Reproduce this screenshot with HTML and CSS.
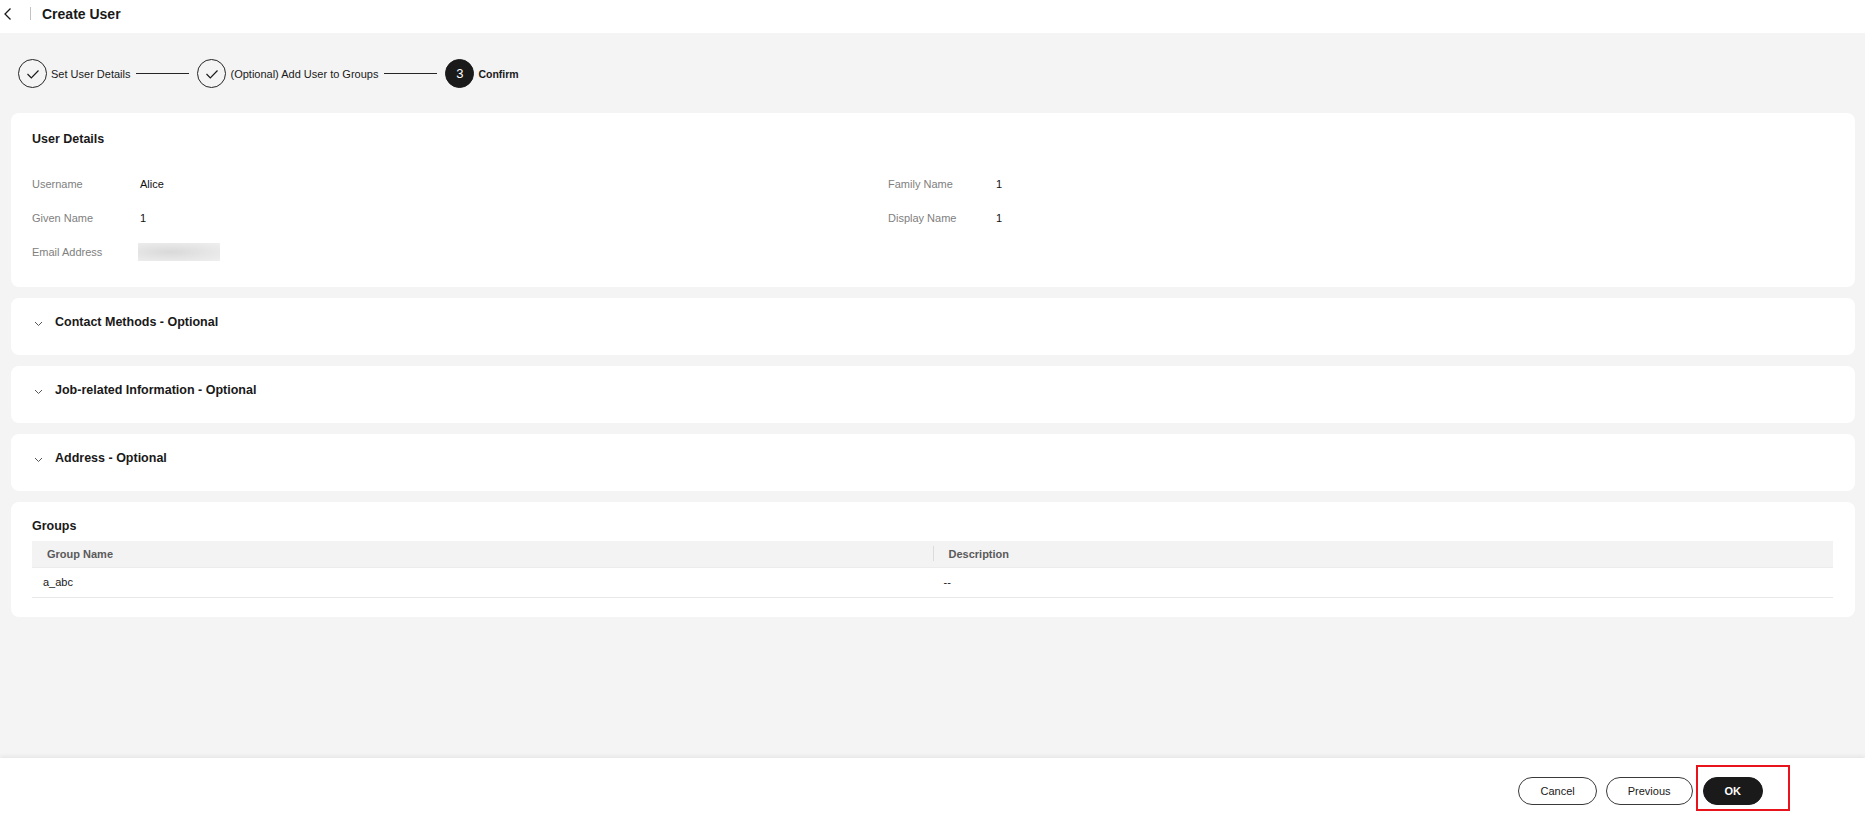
FILE: index.html
```html
<!DOCTYPE html>
<html lang="en">
<head>
  <meta charset="UTF-8">
  <title>Create User</title>
  <link rel="stylesheet" href="styles.css">
</head>
<body>
  <header class="topbar">
    <button class="back" aria-label="Back">
      <svg width="10" height="14" viewBox="0 0 10 14"><path d="M7.5 1.5 L2 7 L7.5 12.5" fill="none" stroke="#191919" stroke-width="1.3"/></svg>
    </button>
    <span class="sep"></span>
    <h1>Create User</h1>
  </header>

  <main class="content">
    <ol class="steps">
      <li class="step done">
        <span class="dot"><svg width="28" height="28" viewBox="0 0 28 28"><path d="M8.5 14 L12.3 17.8 L19.5 10.5" fill="none" stroke="#191919" stroke-width="1.2"/></svg></span>
        <span class="step-name">Set User Details</span>
      </li>
      <li class="line"></li>
      <li class="step done">
        <span class="dot"><svg width="28" height="28" viewBox="0 0 28 28"><path d="M8.5 14 L12.3 17.8 L19.5 10.5" fill="none" stroke="#191919" stroke-width="1.2"/></svg></span>
        <span class="step-name">(Optional) Add User to Groups</span>
      </li>
      <li class="line"></li>
      <li class="step current">
        <span class="dot">3</span>
        <span class="step-name">Confirm</span>
      </li>
    </ol>

    <section class="card details">
      <h2>User Details</h2>
      <div class="fields">
        <div class="field"><span class="label">Username</span><span class="value">Alice</span></div>
        <div class="field"><span class="label">Family Name</span><span class="value">1</span></div>
        <div class="field"><span class="label">Given Name</span><span class="value">1</span></div>
        <div class="field"><span class="label">Display Name</span><span class="value">1</span></div>
        <div class="field"><span class="label">Email Address</span><span class="value"><span class="blurred"></span></span></div>
      </div>
    </section>

    <section class="card fold">
      <svg class="caret" width="9" height="6" viewBox="0 0 9 6"><path d="M1 1 L4.5 4.5 L8 1" fill="none" stroke="#575757" stroke-width="1"/></svg>
      <h2>Contact Methods - Optional</h2>
    </section>
    <section class="card fold">
      <svg class="caret" width="9" height="6" viewBox="0 0 9 6"><path d="M1 1 L4.5 4.5 L8 1" fill="none" stroke="#575757" stroke-width="1"/></svg>
      <h2>Job-related Information - Optional</h2>
    </section>
    <section class="card fold">
      <svg class="caret" width="9" height="6" viewBox="0 0 9 6"><path d="M1 1 L4.5 4.5 L8 1" fill="none" stroke="#575757" stroke-width="1"/></svg>
      <h2>Address - Optional</h2>
    </section>

    <section class="card groups">
      <h2>Groups</h2>
      <table class="grid">
        <thead>
          <tr><th>Group Name</th><th class="divided">Description</th></tr>
        </thead>
        <tbody>
          <tr><td>a_abc</td><td>--</td></tr>
        </tbody>
      </table>
    </section>
  </main>

  <footer class="actions">
    <button class="btn">Cancel</button>
    <button class="btn">Previous</button>
    <button class="btn primary">OK</button>
    <span class="highlight"></span>
  </footer>
</body>
</html>
```

FILE: styles.css
```css
* {
  box-sizing: border-box;
}
body {
  margin: 0;
  height: 100vh;
  display: flex;
  flex-direction: column;
  font-family: 'Liberation Sans', Arial, sans-serif;
  font-size: 11px;
  color: #191919;
  background: #f4f4f4;
}

/* top bar */
.topbar {
  height: 33px;
  flex: none;
  display: flex;
  align-items: center;
  padding: 0 0 6px 3px;
  background: #fff;
}
.back {
  border: none;
  background: none;
  padding: 0;
  display: flex;
}
.sep {
  width: 1px;
  height: 13px;
  background: #c2c2c2;
  margin: 0 11px 0 17px;
}
.topbar h1 {
  margin: 0;
  font-size: 14px;
  font-weight: 700;
}

/* main area */
.content {
  flex: 1;
  padding: 0 10px 0 11px;
}

.steps {
  list-style: none;
  margin: 0;
  padding: 26px 0 25px 7px;
  display: flex;
  align-items: center;
}
.step {
  display: flex;
  align-items: center;
}
.dot {
  width: 29px;
  height: 29px;
  border-radius: 50%;
  border: 1px solid #252525;
  display: flex;
  align-items: center;
  justify-content: center;
}
.dot svg {
  margin: -1px;
}
.step.current .dot {
  background: #1a1a1a;
  border-color: #1a1a1a;
  color: #fff;
  font-size: 13px;
}
.step-name {
  margin-left: 4px;
}
.step.current .step-name {
  font-weight: 700;
  font-size: 10.5px;
}
.line {
  width: 53px;
  height: 1px;
  background: #252525;
  margin: 0 8px 0 6px;
}

.card {
  background: #fff;
  border-radius: 8px;
  padding: 0 22px 0 21px;
  margin-bottom: 11px;
}
.card h2 {
  margin: 0;
  font-size: 12.5px;
  line-height: 20px;
  font-weight: 700;
}

.details {
  padding-top: 16px;
  padding-bottom: 18px;
}
.fields {
  margin-top: 18px;
  display: grid;
  grid-template-columns: 856px 1fr;
  grid-auto-rows: 34px;
}
.field {
  display: flex;
  align-items: center;
}
.label {
  width: 108px;
  color: #808080;
}
.value {
  color: #111;
}
.blurred {
  display: block;
  width: 82px;
  height: 18px;
  margin-left: -2px;
  background: radial-gradient(ellipse at 40% 50%, #d9d9d9 0%, #e6e6e6 55%, #efefef 100%);
}

.fold {
  height: 57px;
  padding-top: 14px;
  display: flex;
  align-items: flex-start;
}
.caret {
  margin: 9px 12px 0 2px;
}

.groups {
  padding-top: 14px;
  padding-bottom: 19px;
}
.grid {
  width: 100%;
  margin-top: 5px;
  border-collapse: collapse;
  table-layout: fixed;
}
.grid th {
  height: 26px;
  padding: 0 0 0 15px;
  text-align: left;
  font-weight: 700;
  color: #5a5a5a;
  background: #f3f3f3;
  border-bottom: 1px solid #ececec;
  position: relative;
}
.grid th.divided {
  padding-left: 16px;
}
.grid th.divided::before {
  content: "";
  position: absolute;
  left: 0;
  top: 5px;
  height: 15px;
  width: 1px;
  background: #dcdcdc;
}
.grid td {
  height: 30px;
  padding: 0 0 0 11px;
  border-bottom: 1px solid #e8e8e8;
}

/* footer */
.actions {
  position: relative;
  height: 58px;
  flex: none;
  display: flex;
  justify-content: flex-end;
  align-items: flex-start;
  gap: 9px;
  padding: 19px 102px 0 0;
  background: #fff;
  box-shadow: 0 -2px 4px rgba(0, 0, 0, 0.06);
}
.btn {
  height: 28px;
  padding: 0 21px;
  border: 1px solid #3a3a3a;
  border-radius: 14px;
  background: #fff;
  color: #191919;
  font-family: inherit;
  font-size: 11px;
}
.btn.primary {
  background: #1a1a1a;
  border-color: #1a1a1a;
  color: #fff;
  font-weight: 700;
  margin-left: 1px;
}
.highlight {
  position: absolute;
  right: 75px;
  top: 7px;
  width: 94px;
  height: 46px;
  border: 2px solid #e8141c;
}
```
